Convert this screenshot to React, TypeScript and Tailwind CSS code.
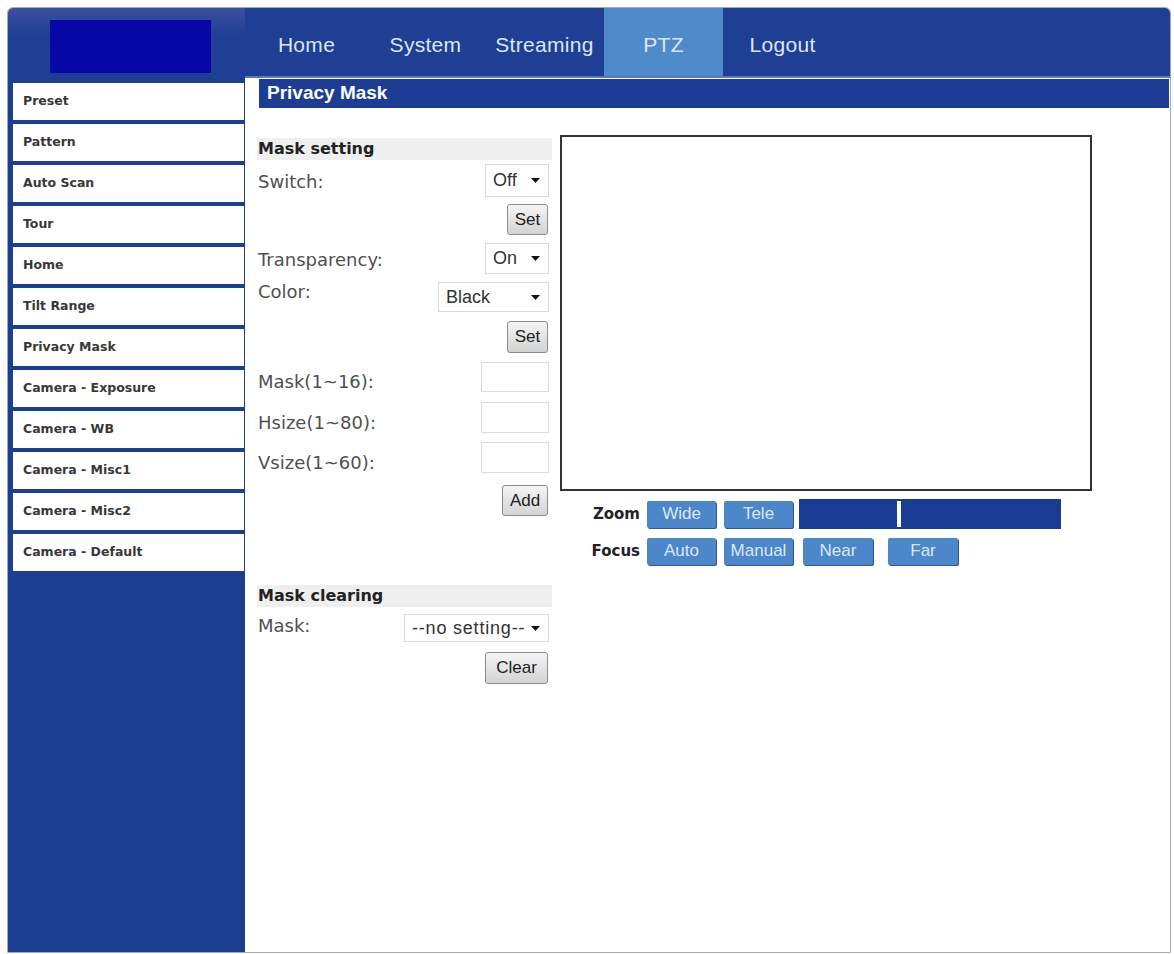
import React from 'react'

const navItems = ['Home', 'System', 'Streaming', 'PTZ', 'Logout']

const sideItems = [
  'Preset',
  'Pattern',
  'Auto Scan',
  'Tour',
  'Home',
  'Tilt Range',
  'Privacy Mask',
  'Camera - Exposure',
  'Camera - WB',
  'Camera - Misc1',
  'Camera - Misc2',
  'Camera - Default',
]

function Arrow() {
  return (
    <svg width="9" height="5" viewBox="0 0 9 5" className="shrink-0">
      <path d="M0 0 L9 0 L4.5 5 Z" fill="#111" />
    </svg>
  )
}

function Select({
  value,
  width,
  height,
  tracking = '',
}: {
  value: string
  width: string
  height: string
  tracking?: string
}) {
  return (
    <div
      className={`${width} ${height} border border-[#dadada] bg-white flex items-center justify-between pl-[7px] pr-[8px] text-[18px] text-[#333] font-['Liberation_Sans',Arial,sans-serif]`}
    >
      <span className={tracking}>{value}</span>
      <Arrow />
    </div>
  )
}

function GrayButton({ label, width, height }: { label: string; width: string; height: string }) {
  return (
    <div
      className={`${width} ${height} border border-[#8c8c8c] rounded-[3px] bg-linear-to-b from-[#f5f5f5] to-[#d3d3d3] flex items-center justify-center text-[17px] text-[#222] font-['Liberation_Sans',Arial,sans-serif]`}
    >
      {label}
    </div>
  )
}

function BlueButton({ label, width, className = '' }: { label: string; width: string; className?: string }) {
  return (
    <div
      className={`${width} ${className} h-[27px] rounded-[2px] bg-[#4b87c9] shadow-[1px_1px_0_#2c5791] flex items-center justify-center text-[17px] text-[#dde7f6] font-['Liberation_Sans',Arial,sans-serif]`}
    >
      {label}
    </div>
  )
}

function SectionHead({ title, className = '' }: { title: string; className?: string }) {
  return (
    <div className={`h-[22px] bg-[#efefef] flex items-center pl-[1px] text-[16px] font-bold text-[#222] ${className}`}>
      {title}
    </div>
  )
}

function Label({ text, pt }: { text: string; pt: string }) {
  return <div className={`${pt} pl-[1px] leading-[20px] text-[18px] text-[#505050]`}>{text}</div>
}

function TextBox({ height }: { height: string }) {
  return <div className={`w-[68px] ${height} border border-[#dcdcdc] bg-white`} />
}

export default function App() {
  return (
    <div className="w-[1174px] h-[954px] bg-white pt-[7px] pl-[7px]">
      <div className="w-[1164px] h-[946px] border border-[#a9a9a9] rounded-t-[6px] overflow-hidden flex flex-col">
        {/* Header */}
        <div className="flex h-[70px] shrink-0">
          <div className="w-[237px] bg-linear-to-b from-[#3c4f9f] to-[#1e3f94] to-40% pt-[12px] pl-[42px]">
            <div className="w-[161px] h-[53px] bg-[#0707a6]" />
          </div>
          <nav className="flex flex-1 bg-[#1e3f94] border-b-2 border-[#5879c4] pl-[2px]">
            {navItems.map((item) => (
              <div
                key={item}
                className={`w-[119px] flex items-center justify-center pt-[6px] text-[21px] tracking-[0.3px] text-[#dce6f7] font-['Liberation_Sans',Arial,sans-serif] ${
                  item === 'PTZ' ? 'bg-[#4f8acb]' : ''
                }`}
              >
                {item}
              </div>
            ))}
          </nav>
        </div>

        {/* Body */}
        <div className="flex flex-1">
          <aside className="w-[237px] shrink-0 bg-[#1c3e93] pt-[5px] pl-[5px] pr-[1px]">
            {sideItems.map((item) => (
              <div
                key={item}
                className="h-[37px] mb-[4px] bg-white flex items-center pl-[10px] text-[12.5px] font-bold text-[#383838] font-['DejaVu_Sans',Verdana,sans-serif]"
              >
                {item}
              </div>
            ))}
          </aside>

          <main className="flex-1 bg-white">
            <div className="ml-[14px] mr-[1px] mt-[1px] h-[29px] bg-[#1d3d95] flex items-center pl-[8px] text-[19px] font-bold text-white font-['Liberation_Sans',Arial,sans-serif]">
              Privacy Mask
            </div>

            <div className="flex items-start mt-[27px] ml-[12px]">
              {/* Form column */}
              <div className="w-[295px] pt-[3px] font-['DejaVu_Sans',Verdana,sans-serif]">
                <SectionHead title="Mask setting" />

                <div className="flex justify-between items-start pr-[3px] mt-[4px]">
                  <Label text="Switch:" pt="pt-[8px]" />
                  <Select value="Off" width="w-[64px]" height="h-[33px]" />
                </div>
                <div className="flex justify-end pr-[4px] mt-[7px]">
                  <GrayButton label="Set" width="w-[41px]" height="h-[31px]" />
                </div>

                <div className="flex justify-between items-start pr-[3px] mt-[8px]">
                  <Label text="Transparency:" pt="pt-[7px]" />
                  <Select value="On" width="w-[64px]" height="h-[31px]" />
                </div>
                <div className="flex justify-between items-start pr-[3px] mt-[8px]">
                  <Label text="Color:" pt="pt-[0px]" />
                  <Select value="Black" width="w-[111px]" height="h-[30px]" />
                </div>
                <div className="flex justify-end pr-[4px] mt-[9px]">
                  <GrayButton label="Set" width="w-[41px]" height="h-[32px]" />
                </div>

                <div className="flex justify-between items-start pr-[3px] mt-[9px]">
                  <Label text="Mask(1~16):" pt="pt-[10px]" />
                  <TextBox height="h-[30px]" />
                </div>
                <div className="flex justify-between items-start pr-[3px] mt-[10px]">
                  <Label text="Hsize(1~80):" pt="pt-[11px]" />
                  <TextBox height="h-[31px]" />
                </div>
                <div className="flex justify-between items-start pr-[3px] mt-[9px]">
                  <Label text="Vsize(1~60):" pt="pt-[11px]" />
                  <TextBox height="h-[31px]" />
                </div>
                <div className="flex justify-end pr-[4px] mt-[12px]">
                  <GrayButton label="Add" width="w-[46px]" height="h-[31px]" />
                </div>

                <SectionHead title="Mask clearing" className="mt-[69px]" />
                <div className="flex justify-between items-start pr-[3px] mt-[7px]">
                  <Label text="Mask:" pt="pt-[2px]" />
                  <Select value="--no setting--" width="w-[145px]" height="h-[28px]" tracking="tracking-[0.8px]" />
                </div>
                <div className="flex justify-end pr-[4px] mt-[10px]">
                  <GrayButton label="Clear" width="w-[63px]" height="h-[32px]" />
                </div>
              </div>

              {/* Video + PTZ controls */}
              <div className="ml-[8px] flex flex-col">
                <div className="w-[532px] h-[356px] border-2 border-[#333] bg-white" />

                <div className="flex items-center h-[30px] mt-[8px]">
                  <div className="w-[80px] text-right text-[15px] font-bold text-[#222] font-['DejaVu_Sans',Verdana,sans-serif]">
                    Zoom
                  </div>
                  <BlueButton label="Wide" width="w-[69px]" className="ml-[7px]" />
                  <BlueButton label="Tele" width="w-[69px]" className="ml-[8px]" />
                  <div className="ml-[6px] w-[262px] h-[30px] bg-[#1b3c95] flex items-center">
                    <div className="ml-[98px] w-[4px] h-[26px] bg-white" />
                  </div>
                </div>

                <div className="flex items-center h-[28px] mt-[8px]">
                  <div className="w-[80px] text-right text-[15px] font-bold text-[#222] font-['DejaVu_Sans',Verdana,sans-serif]">
                    Focus
                  </div>
                  <BlueButton label="Auto" width="w-[69px]" className="ml-[7px]" />
                  <BlueButton label="Manual" width="w-[69px]" className="ml-[8px]" />
                  <BlueButton label="Near" width="w-[70px]" className="ml-[10px]" />
                  <BlueButton label="Far" width="w-[70px]" className="ml-[15px]" />
                </div>
              </div>
            </div>
          </main>
        </div>
      </div>
    </div>
  )
}
